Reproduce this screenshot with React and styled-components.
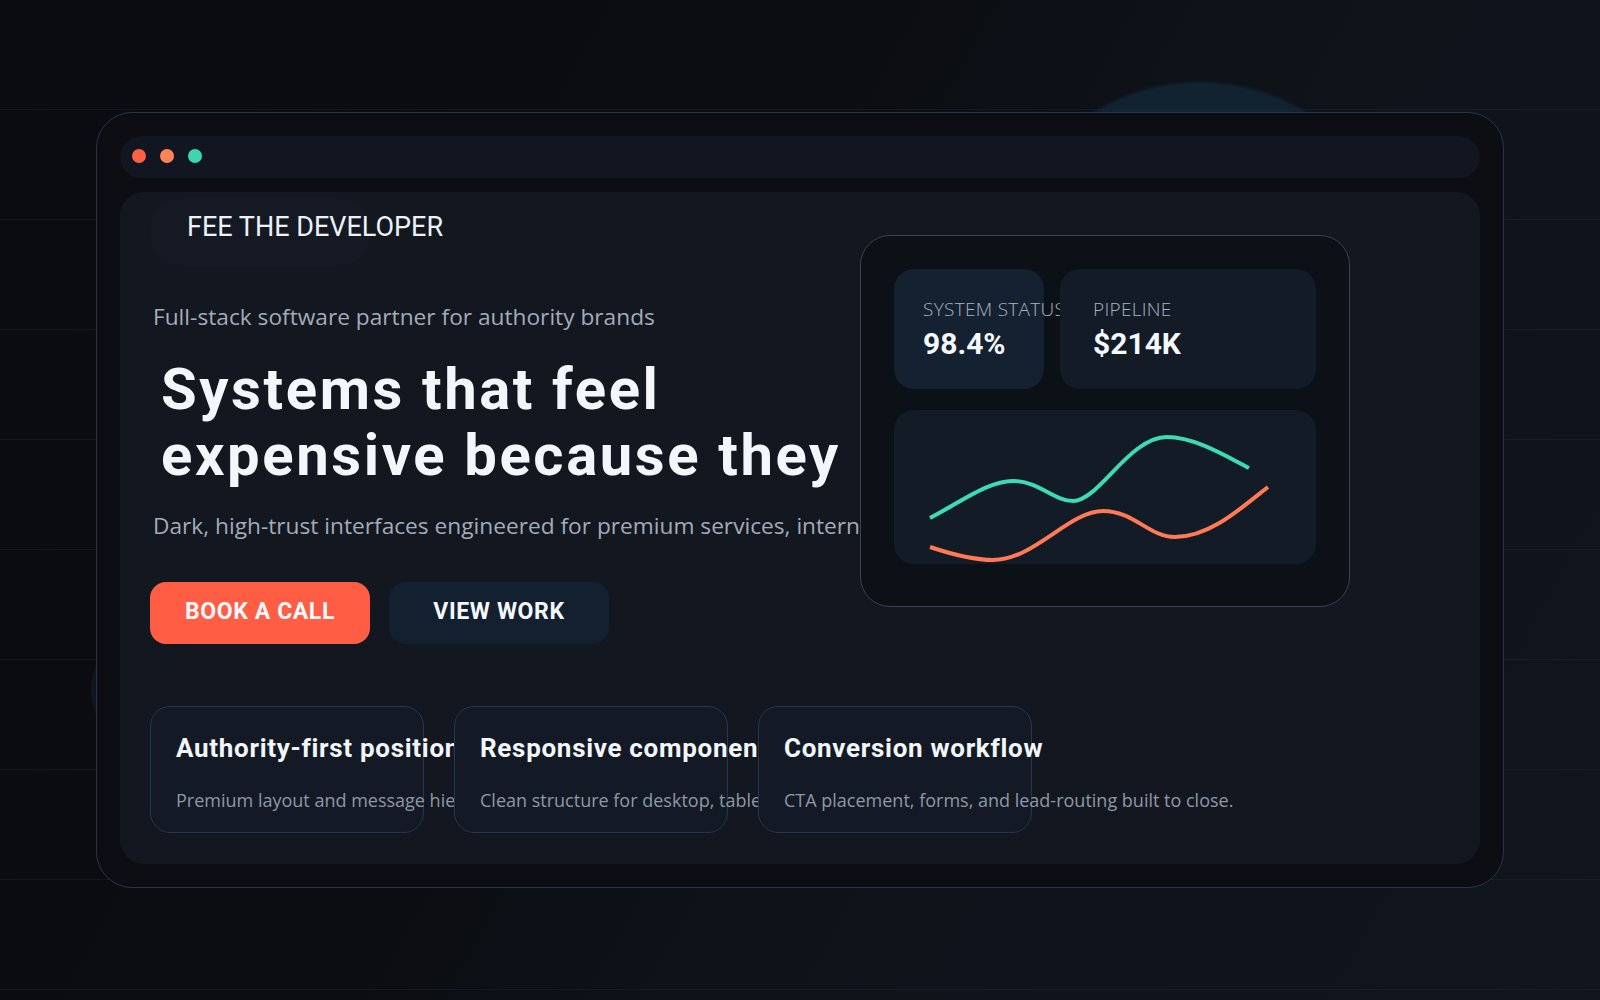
import React from 'react'
import styled, { createGlobalStyle } from 'styled-components'

const GlobalStyle = createGlobalStyle`
  html, body {
    margin: 0;
    padding: 0;
    background: #0b0d12;
  }
  * {
    box-sizing: border-box;
  }
`

const Page = styled.div`
  width: 1600px;
  height: 1000px;
  display: flex;
  align-items: center;
  justify-content: center;
  overflow: hidden;
  background:
    repeating-linear-gradient(to bottom, transparent 0 109px, rgba(34, 45, 62, 0.35) 109px 110px),
    radial-gradient(circle 205px at 1200px 285px, #112231 98%, transparent 100%),
    radial-gradient(circle 60px at 150px 690px, #10151e 97%, transparent 100%),
    linear-gradient(119deg, #0a0c10 0%, #0b0d12 42%, #0e1219 56%, #10151e 100%);
`

const Frame = styled.div`
  width: 1408px;
  height: 776px;
  padding: 23px;
  border: 1px solid #2b3547;
  border-radius: 36px;
  background: #0c0e13;
  display: flex;
  flex-direction: column;
  gap: 14px;
`

const TitleBar = styled.div`
  height: 42px;
  border-radius: 21px;
  background: #111620;
  display: flex;
  align-items: center;
  gap: 14px;
  padding: 0 0 2px 12px;
`

const Dot = styled.span`
  width: 14px;
  height: 14px;
  border-radius: 50%;
  background: ${p => p.color};
`

const Panel = styled.div`
  flex: 1;
  border-radius: 24px;
  background: #121720;
  padding: 5px 30px 31px 30px;
  display: flex;
  flex-direction: column;
`

const Top = styled.div`
  display: grid;
  grid-template-columns: 710px 490px;
  align-items: start;
`

const Left = styled.div`
  display: flex;
  flex-direction: column;
  overflow: hidden;
`

const Brand = styled.div`
  width: 220px;
  height: 70px;
  border-radius: 32px;
  background: #141923;
  padding: 15px 0 0 37px;
  white-space: nowrap;
  font-family: Roboto, "Liberation Sans", sans-serif;
  font-weight: 400;
  font-size: 27px;
  line-height: 30px;
  letter-spacing: 0;
  color: #eef2f7;
`

const Lead = styled.p`
  margin: ${p => p.top}px 0 0;
  padding-left: 3px;
  white-space: nowrap;
  font-family: "Open Sans", "Noto Sans", sans-serif;
  font-size: 22.7px;
  line-height: 31.5px;
  color: #a3acba;
`

const Headline = styled.h1`
  margin: 23px 0 0;
  padding-left: 11px;
  font-family: Roboto, "Liberation Sans", sans-serif;
  font-weight: 700;
  font-size: 58px;
  line-height: 66px;
  letter-spacing: 2.6px;
  white-space: nowrap;
  color: #f3f6fa;
`

const Actions = styled.div`
  margin-top: 41px;
  display: flex;
  gap: 19px;
`

const Button = styled.button`
  width: 220px;
  height: 62px;
  border: none;
  border-radius: 16px;
  background: ${p => (p.primary ? '#ff5e45' : '#122030')};
  color: #f6f8fb;
  font-family: Roboto, "Liberation Sans", sans-serif;
  font-weight: 700;
  font-size: 23px;
  letter-spacing: 0.6px;
  display: flex;
  align-items: center;
  justify-content: center;
  padding: 0 0 4px;
  cursor: pointer;
`

const MetricsCard = styled.div`
  position: relative;
  margin-top: 38px;
  width: 490px;
  height: 372px;
  border: 1px solid #3a4352;
  border-radius: 30px;
  background: #0c1017;
  padding: 33px;
`

const StatRow = styled.div`
  display: grid;
  grid-template-columns: 150px 256px;
  gap: 16px;
`

const Stat = styled.div`
  position: relative;
  height: 120px;
  border-radius: 20px;
  background: ${p => p.bg};
  padding: 28px 0 0 ${p => p.inset}px;
  white-space: nowrap;
`

const StatLabel = styled.div`
  font-family: "Open Sans", "Noto Sans", sans-serif;
  font-weight: 300;
  font-size: 19px;
  line-height: 24px;
  letter-spacing: 0.3px;
  color: #aab3c1;
`

const StatValue = styled.div`
  margin-top: 5px;
  font-family: Roboto, "Liberation Sans", sans-serif;
  font-weight: 700;
  font-size: 30px;
  line-height: 36px;
  color: #f4f7fb;
`

const Chart = styled.div`
  margin-top: 21px;
  height: 154px;
  border-radius: 20px;
  background: #131b27;
  overflow: hidden;

  svg {
    display: block;
  }
`

const Features = styled.div`
  margin-top: 62px;
  display: flex;
  gap: 30px;
`

const Feature = styled.div`
  position: relative;
  width: 274px;
  height: 127px;
  border: 1px solid #29354a;
  border-radius: 20px;
  background: #131a25;
  padding: 25px 0 0 25px;
  white-space: nowrap;
`

const FeatureTitle = styled.h3`
  margin: 0;
  font-family: Roboto, "Liberation Sans", sans-serif;
  font-weight: 700;
  font-size: 26px;
  line-height: 32px;
  letter-spacing: 0.7px;
  color: #f3f6fa;
`

const FeatureText = styled.p`
  margin: 23px 0 0;
  font-family: "Open Sans", "Noto Sans", sans-serif;
  font-size: 18px;
  line-height: 26px;
  color: #8f98a6;
`

const features = [
  { title: 'Authority-first positioning', text: 'Premium layout and message hierarchy for trust.' },
  { title: 'Responsive components', text: 'Clean structure for desktop, tablet, and mobile.' },
  { title: 'Conversion workflow', text: 'CTA placement, forms, and lead-routing built to close.' },
]

function TrendChart() {
  return (
    <svg width="422" height="154" viewBox="0 0 422 154" fill="none">
      <path
        d="M36 108 C 70 90, 95 71, 119 71 C 145 71, 160 91, 179 91 C 205 91, 235 27, 273 27 C 300 27, 330 45, 355 58"
        stroke="#3ddbb4"
        strokeWidth="4"
      />
      <path
        d="M36 137 C 60 145, 80 150, 99 150 C 140 150, 175 101, 209 101 C 240 101, 255 127, 281 127 C 315 127, 345 100, 374 77"
        stroke="#ff7a55"
        strokeWidth="4"
      />
    </svg>
  )
}

export default function App() {
  return (
    <>
      <GlobalStyle />
      <Page>
        <Frame>
          <TitleBar>
            <Dot color="#ff5f45" />
            <Dot color="#ff8358" />
            <Dot color="#3dd6b0" />
          </TitleBar>
          <Panel>
            <Top>
              <Left>
                <Brand>FEE THE DEVELOPER</Brand>
                <Lead top={34}>Full-stack software partner for authority brands</Lead>
                <Headline>
                  Systems that feel
                  <br />
                  expensive because they
                </Headline>
                <Lead top={22}>
                  Dark, high-trust interfaces engineered for premium services, internal tools, and growth teams.
                </Lead>
                <Actions>
                  <Button primary>BOOK A CALL</Button>
                  <Button>VIEW WORK</Button>
                </Actions>
              </Left>
              <MetricsCard>
                <StatRow>
                  <Stat bg="#132130" inset={29}>
                    <StatLabel>SYSTEM STATUS</StatLabel>
                    <StatValue>98.4%</StatValue>
                  </Stat>
                  <Stat bg="#131b27" inset={33}>
                    <StatLabel>PIPELINE</StatLabel>
                    <StatValue>$214K</StatValue>
                  </Stat>
                </StatRow>
                <Chart>
                  <TrendChart />
                </Chart>
              </MetricsCard>
            </Top>
            <Features>
              {features.map(f => (
                <Feature key={f.title}>
                  <FeatureTitle>{f.title}</FeatureTitle>
                  <FeatureText>{f.text}</FeatureText>
                </Feature>
              ))}
            </Features>
          </Panel>
        </Frame>
      </Page>
    </>
  )
}
